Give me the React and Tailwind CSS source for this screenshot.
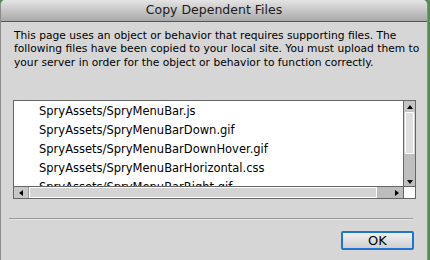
import React from 'react';

const files = [
  'SpryAssets/SpryMenuBar.js',
  'SpryAssets/SpryMenuBarDown.gif',
  'SpryAssets/SpryMenuBarDownHover.gif',
  'SpryAssets/SpryMenuBarHorizontal.css',
  'SpryAssets/SpryMenuBarRight.gif',
];

export default function App() {
  return (
    <div className="w-[430px] h-[260px] bg-[#4f8f52] overflow-hidden flex" style={{ fontFamily: '"DejaVu Sans", sans-serif' }}>
      <div className="w-[428px] h-[260px] bg-[#d6d6d6] rounded-t-[5px] border-l border-r border-[#8c8c8c] flex flex-col overflow-hidden">
        {/* title bar */}
        <div className="h-[22px] shrink-0 bg-gradient-to-b from-[#e4e4e4] to-[#a9a9a9] border-b border-[#555] flex items-center justify-center text-[12.5px] text-[#1a1a1a]">
          Copy Dependent Files
        </div>

        <div className="pl-[13px] pt-[6.5px] text-[10.7px] leading-[13.5px] text-black">
          <div className="whitespace-nowrap">This page uses an object or behavior that requires supporting files. The</div>
          <div className="whitespace-nowrap">following files have been copied to your local site. You must upload them to</div>
          <div className="whitespace-nowrap">your server in order for the object or behavior to function correctly.</div>
        </div>

        {/* file list */}
        <div className="ml-[12px] mt-[31px] w-[403px] h-[99px] shrink-0 border border-[#666] bg-white flex flex-col">
          <div className="flex flex-1 min-h-0">
            <div className="flex-1 overflow-hidden pl-[25px] pt-[1px] text-[11.5px]">
              {files.map((f) => (
                <div key={f} className="h-[19px] leading-[19px] whitespace-nowrap">{f}</div>
              ))}
            </div>
            <div className="w-[12px] border-l border-[#666] bg-[#d0d0d0] flex flex-col">
              <div className="h-[11px] bg-[#c4c4c4] flex items-center justify-center">
                <div className="w-0 h-0 border-l-[3.5px] border-r-[3.5px] border-b-[4px] border-l-transparent border-r-transparent border-b-black" />
              </div>
              <div className="h-[42px] mx-[1px] bg-[#dedede] border border-white rounded-[1px]" />
              <div className="flex-1 bg-[#bfbfbf] flex items-end justify-center pb-[2px]">
                <div className="w-0 h-0 border-l-[3.5px] border-r-[3.5px] border-t-[4px] border-l-transparent border-r-transparent border-t-black" />
              </div>
            </div>
          </div>
          <div className="h-[12px] border-t border-[#666] flex">
            <div className="w-[15px] bg-[#c8c8c8] border-r border-[#999] flex items-center justify-center">
              <div className="w-0 h-0 border-t-[3.5px] border-b-[3.5px] border-r-[4px] border-t-transparent border-b-transparent border-r-black" />
            </div>
            <div className="flex-1 bg-[#d4d4d4] border border-white" />
            <div className="w-[26px] bg-[#bcbcbc] flex items-center justify-end pr-[4px]">
              <div className="w-0 h-0 border-t-[3.5px] border-b-[3.5px] border-l-[4px] border-t-transparent border-b-transparent border-l-black" />
            </div>
            <div className="w-[12px] bg-white border-l border-[#666]" />
          </div>
        </div>

        {/* separator */}
        <div className="ml-[8px] mt-[19px] w-[404px] h-[2px] shrink-0 border-t border-[#9a9a9a] border-b border-b-[#e6e6e6]" />

        {/* button */}
        <div className="flex justify-end pr-[13px] mt-[11px]">
          <button className="w-[73px] h-[19px] rounded-[2px] border-2 border-[#1f74d0] bg-gradient-to-b from-[#f0f0f0] to-[#cfcfcf] text-[13px] leading-[14px] text-black">
            OK
          </button>
        </div>
      </div>
    </div>
  );
}
